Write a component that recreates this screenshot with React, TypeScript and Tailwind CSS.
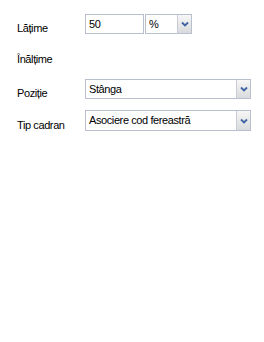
import React from 'react';

const font = { fontFamily: '"Liberation Sans", Arial, sans-serif' };

const Chevron = () => (
  <svg width="8" height="6" viewBox="0 0 8 6">
    <path d="M1 1.5 L4 4.5 L7 1.5" fill="none" stroke="#3f64a3" strokeWidth="1.8" />
  </svg>
);

const Select = ({ value, width }: { value: string; width: string }) => (
  <div className={`flex h-[20px] border border-[#b9bfcc] bg-white ${width}`}>
    <div className="flex-1 flex items-center pl-[3px] text-[11px] tracking-[-0.4px] text-black">{value}</div>
    <div className="w-[14px] flex items-center justify-center border-l border-[#c9ccd6] bg-gradient-to-b from-[#f7f7f7] to-[#d9dadd]">
      <Chevron />
    </div>
  </div>
);

const Label = ({ text }: { text: string }) => (
  <div className="w-[68px] text-[11px] tracking-[-0.4px] text-black leading-none">{text}</div>
);

export default function App() {
  return (
    <div className="w-[264px] h-[342px] bg-white pt-[14px] pl-[17px]" style={font}>
      <div className="flex items-end h-[20px]">
        <Label text="Lățime" />
        <div className="flex gap-[1px]">
          <div className="w-[59px] h-[20px] border border-[#b9bfcc] flex items-center pl-[3px] text-[11px] tracking-[-0.4px]">50</div>
          <Select value="%" width="w-[47px]" />
        </div>
      </div>
      <div className="flex items-end h-[20px] mt-[11px]">
        <Label text="Înălțime" />
      </div>
      <div className="flex items-end h-[20px] mt-[14px]">
        <Label text="Poziție" />
        <Select value="Stânga" width="w-[166px]" />
      </div>
      <div className="flex items-end h-[21px] mt-[11px]">
        <Label text="Tip cadran" />
        <Select value="Asociere cod fereastră" width="w-[166px] h-[21px]" />
      </div>
    </div>
  );
}
